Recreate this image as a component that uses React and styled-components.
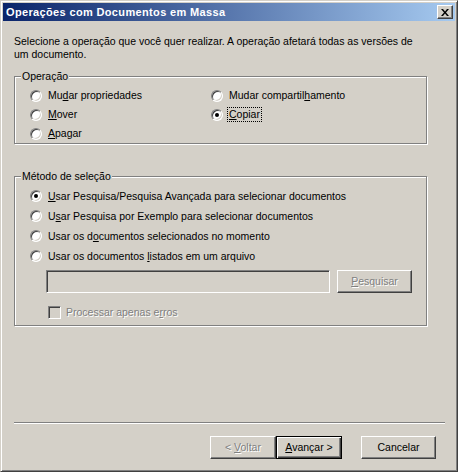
import React from 'react';
import styled, { createGlobalStyle, css } from 'styled-components';

const GlobalStyle = createGlobalStyle`
  html, body {
    margin: 0;
    padding: 0;
    background: #d4d0c8;
  }
  body {
    font-family: "Liberation Sans", Arial, sans-serif;
    font-size: 10.5px;
    color: #000;
  }
`;

const Window = styled.div`
  box-sizing: border-box;
  width: 458px;
  height: 472px;
  display: flex;
  flex-direction: column;
  padding: 2px;
  background: #d4d0c8;
  border: 1px solid;
  border-color: #d4d0c8 #404040 #404040 #d4d0c8;
  box-shadow: inset 1px 1px 0 #fff, inset -1px -1px 0 #808080;
`;

const TitleBar = styled.div`
  height: 18px;
  display: flex;
  align-items: center;
  justify-content: space-between;
  padding: 0 2px 0 3px;
  background: linear-gradient(to right, #0a246a, #a6caf0);
`;

const Title = styled.span`
  color: #fff;
  font-weight: bold;
  font-size: 11px;
  letter-spacing: 0.35px;
`;

const raised = css`
  background: #d4d0c8;
  border: 1px solid;
  border-color: #fff #404040 #404040 #fff;
  box-shadow: inset -1px -1px 0 #808080, inset 1px 1px 0 #d4d0c8;
`;

const CloseButton = styled.div`
  ${raised}
  box-sizing: border-box;
  width: 16px;
  height: 14px;
  display: flex;
  align-items: center;
  justify-content: center;
`;

const Body = styled.div`
  flex: 1;
  display: flex;
  flex-direction: column;
  padding: 0 10px 0 11px;
`;

const Intro = styled.p`
  margin: 14px 0 0;
  line-height: 13px;
`;

const Group = styled.div`
  position: relative;
  box-sizing: border-box;
  width: 413px;
  height: ${(p) => p.$height}px;
  margin-top: ${(p) => p.$top}px;
  padding: ${(p) => p.$padTop}px 0 0 15px;
  border: 1px solid #808080;
  box-shadow: inset 1px 1px 0 #fff, 1px 1px 0 #fff;
`;

const Caption = styled.span`
  position: absolute;
  top: -7px;
  left: 6px;
  padding: 0 1px;
  line-height: 13px;
  background: #d4d0c8;
`;

const OpGrid = styled.div`
  display: grid;
  grid-template-columns: 181px auto;
  grid-auto-rows: 19px;
`;

const MethodList = styled.div`
  display: flex;
  flex-direction: column;
`;

const Option = styled.label`
  display: flex;
  align-items: center;
  gap: 6px;
  height: ${(p) => p.$h || 19}px;
  white-space: nowrap;
`;

const RadioDot = styled.span`
  box-sizing: border-box;
  width: 12px;
  height: 12px;
  flex: none;
  border-radius: 50%;
  border: 1px solid;
  border-color: #808080 #fff #fff #808080;
  box-shadow: inset 1px 1px 0 #404040, inset -1px -1px 0 #d4d0c8;
  background: #fff;
  display: flex;
  align-items: center;
  justify-content: center;
  &::after {
    content: '';
    width: 4px;
    height: 4px;
    border-radius: 50%;
    background: ${(p) => (p.$checked ? '#000' : 'transparent')};
  }
`;

const Text = styled.span`
  line-height: 13px;
  ${(p) =>
    p.$focus &&
    css`
      outline: 1px dotted #000;
      outline-offset: 0;
      padding: 0 1px;
      margin-left: -1px;
    `}
  ${(p) =>
    p.$disabled &&
    css`
      color: #808080;
      text-shadow: 1px 1px 0 #fff;
    `}
`;

const FileRow = styled.div`
  display: flex;
  gap: 7px;
  margin: 4px 0 0 16px;
`;

const TextField = styled.div`
  box-sizing: border-box;
  width: 284px;
  height: 23px;
  border: 1px solid;
  border-color: #808080 #fff #fff #808080;
  box-shadow: inset 1px 1px 0 #404040, inset -1px -1px 0 #d4d0c8;
  background: #d4d0c8;
`;

const Button = styled.div`
  ${raised}
  box-sizing: border-box;
  width: ${(p) => p.$w || 75}px;
  height: 23px;
  display: flex;
  align-items: center;
  justify-content: center;
  ${(p) =>
    p.$default &&
    css`
      border: 1px solid #000;
      box-shadow: inset 1px 1px 0 #fff, inset -1px -1px 0 #404040,
        inset -2px -2px 0 #808080;
    `}
`;

const CheckRow = styled.label`
  display: flex;
  align-items: center;
  gap: 5px;
  margin: 13px 0 0 18px;
  height: 13px;
`;

const CheckBox = styled.span`
  box-sizing: border-box;
  width: 13px;
  height: 13px;
  border: 1px solid;
  border-color: #808080 #fff #fff #808080;
  box-shadow: inset 1px 1px 0 #404040, inset -1px -1px 0 #d4d0c8;
  background: #d4d0c8;
`;

const Separator = styled.div`
  margin-top: 96px;
  height: 0;
  border-top: 1px solid #808080;
  border-bottom: 1px solid #fff;
`;

const ButtonBar = styled.div`
  display: flex;
  justify-content: flex-end;
  margin-top: 12px;
  padding-right: 9px;
`;

const Pair = styled.div`
  display: flex;
  margin-right: 19px;
`;

const Radio = ({ checked, focus, h, children }) => (
  <Option $h={h}>
    <RadioDot $checked={checked} />
    <Text $focus={focus}>{children}</Text>
  </Option>
);

export default function App() {
  return (
    <>
      <GlobalStyle />
      <Window>
        <TitleBar>
          <Title>Operações com Documentos em Massa</Title>
          <CloseButton>
            <svg width="8" height="7" viewBox="0 0 8 7">
              <path d="M0 0h2l2 2.5L6 0h2L5 3.5 8 7H6L4 4.5 2 7H0l3-3.5z" fill="#000" />
            </svg>
          </CloseButton>
        </TitleBar>
        <Body>
          <Intro>
            Selecione a operação que você quer realizar. A operação afetará todas as versões de
            <br />
            um documento.
          </Intro>

          <Group $height={68} $top={15} $padTop={9}>
            <Caption>Operação</Caption>
            <OpGrid>
              <Radio>
                Mu<u>d</u>ar propriedades
              </Radio>
              <Radio>
                Mudar compartil<u>h</u>amento
              </Radio>
              <Radio>
                <u>M</u>over
              </Radio>
              <Radio checked focus>
                <u>C</u>opiar
              </Radio>
              <Radio>
                <u>A</u>pagar
              </Radio>
            </OpGrid>
          </Group>

          <Group $height={150} $top={32} $padTop={9}>
            <Caption>Método de seleção</Caption>
            <MethodList>
              <Radio h={20} checked>
                <u>U</u>sar Pesquisa/Pesquisa Avançada para selecionar documentos
              </Radio>
              <Radio h={20}>
                U<u>s</u>ar Pesquisa por Exemplo para selecionar documentos
              </Radio>
              <Radio h={20}>
                Usar os d<u>o</u>cumentos selecionados no momento
              </Radio>
              <Radio h={20}>
                Usar os documentos <u>l</u>istados em um arquivo
              </Radio>
            </MethodList>
            <FileRow>
              <TextField />
              <Button>
                <Text $disabled>
                  <u>P</u>esquisar
                </Text>
              </Button>
            </FileRow>
            <CheckRow>
              <CheckBox />
              <Text $disabled>
                Processar apenas e<u>r</u>ros
              </Text>
            </CheckRow>
          </Group>

          <Separator />

          <ButtonBar>
            <Pair>
              <Button $w={66}>
                <Text $disabled>
                  &lt; <u>V</u>oltar
                </Text>
              </Button>
              <Button $w={66} $default>
                <Text>
                  <u>A</u>vançar &gt;
                </Text>
              </Button>
            </Pair>
            <Button>
              <Text>Cancelar</Text>
            </Button>
          </ButtonBar>
        </Body>
      </Window>
    </>
  );
}
